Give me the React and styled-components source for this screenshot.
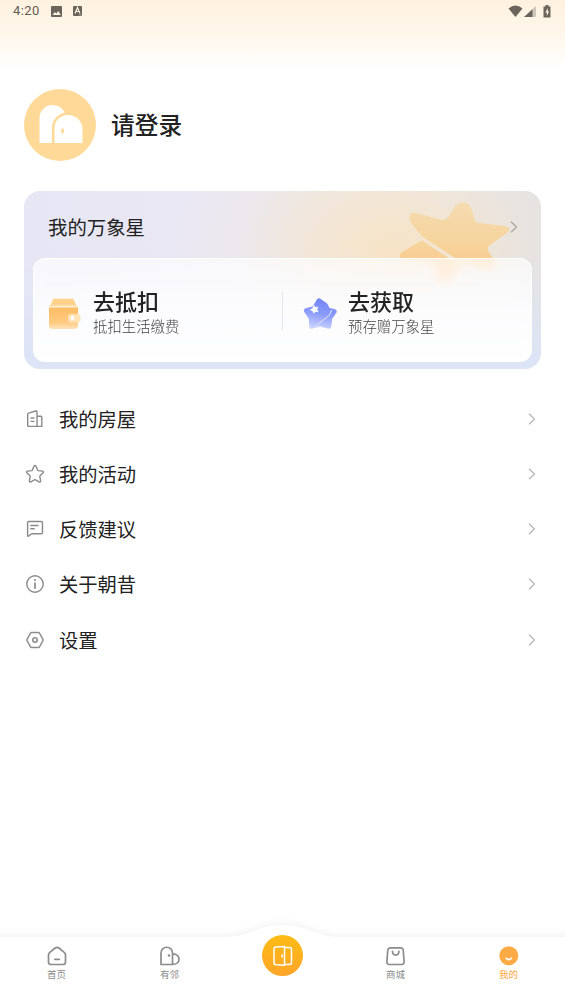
import React from "react";
import styled, { createGlobalStyle } from "styled-components";

const GlobalStyle = createGlobalStyle`
  * {
    box-sizing: border-box;
  }

  body {
    margin: 0;
    background: #fff;
    font-family: "Noto Sans CJK SC", sans-serif;
    color: #222;
  }
`;

// Styled Components
const Page = styled.div`
  display: flex;
  flex-direction: column;
  width: 100%;
  height: 1004px;
  overflow: hidden;
  background: linear-gradient(#fff1df 0, #fff7eb 34px, #fffefc 66px, #fff 70px);
`;

const StatusBar = styled.header`
  display: flex;
  align-items: center;
  height: 22px;
  padding: 0 14px 0 13px;
`;

const Clock = styled.span`
  width: 38px;
  font-family: Roboto, sans-serif;
  font-size: 13px;
  font-weight: 400;
  letter-spacing: 0.4px;
  line-height: 22px;
  color: #5f5a52;
`;

const StatusIcon = styled.svg`
  display: block;
  flex: none;
  margin-left: ${(props) => props.$gap || 0}px;
`;

const Spacer = styled.div`
  flex: 1;
`;

const Profile = styled.section`
  display: flex;
  align-items: center;
  gap: 15px;
  margin: 67px 24px 30px;
`;

const Avatar = styled.svg`
  display: block;
  width: 72px;
  height: 72px;
`;

const LoginText = styled.h1`
  margin: 0;
  padding-bottom: 3px;
  font-size: 23.7px;
  font-weight: 500;
  line-height: 36px;
`;

const StarCard = styled.section`
  position: relative;
  display: flex;
  flex-direction: column;
  height: 178px;
  margin: 0 24px;
  padding: 0 9px 7px;
  border-radius: 16px;
  overflow: hidden;
  background:
    linear-gradient(rgba(220, 228, 246, 0) 35%, #dce4f6 96%),
    radial-gradient(
      ellipse 220px 150px at 365px 60px,
      rgba(248, 227, 194, 0.9) 0,
      rgba(246, 229, 204, 0.62) 35%,
      rgba(242, 230, 216, 0.2) 68%,
      rgba(240, 230, 218, 0) 100%
    ),
    linear-gradient(90deg, #e7e6f4 0, #eae8f3 38%, #ece8e6 65%, #e4e2e3 100%);
`;

const CardStar = styled.svg`
  position: absolute;
  top: 0;
  left: 367px;
`;

const CardHeader = styled.div`
  position: relative;
  display: flex;
  align-items: center;
  justify-content: space-between;
  height: 67px;
  padding: 5px 14px 0 15px;
  font-size: 19.4px;
  line-height: 28px;
`;

const Panel = styled.div`
  position: relative;
  display: flex;
  align-items: center;
  flex: 1;
  border: 1.5px solid rgba(255, 255, 255, 0.85);
  border-radius: 12px;
  background: linear-gradient(
    rgba(255, 255, 255, 0.68) 0,
    rgba(255, 255, 255, 0.87) 50%,
    rgba(255, 255, 255, 0.98) 100%
  );
  backdrop-filter: blur(4px);
`;

const PanelItem = styled.div`
  display: flex;
  align-items: center;
  width: ${(props) => props.$width}px;
  padding: 5px 0 0 ${(props) => props.$left}px;
  gap: ${(props) => props.$gap}px;

  > svg {
    margin-top: 2px;
  }
`;

const Divider = styled.div`
  width: 1px;
  height: 38px;
  margin-top: 2px;
  background: #e6e6ea;
`;

const ItemTitle = styled.div`
  font-size: 22px;
  font-weight: 500;
  line-height: 27px;
`;

const ItemNote = styled.div`
  font-size: 14.4px;
  font-weight: 300;
  line-height: 24px;
  color: #444;
`;

const Menu = styled.nav`
  margin-top: 22px;
`;

const MenuRow = styled.div`
  display: flex;
  align-items: center;
  height: 55.25px;
  padding: 0 29px 0 25px;
`;

const MenuLabel = styled.span`
  flex: 1;
  margin-left: 14px;
  font-size: 19.3px;
  line-height: 28px;
`;

const MenuIcon = styled.svg`
  display: block;
  width: 20px;
  height: 20px;
  fill: none;
  stroke: #8b8b8b;
  stroke-width: 1.4;
  stroke-linecap: round;
  stroke-linejoin: round;
`;

const ArrowIcon = styled.svg`
  display: block;
  width: 8px;
  height: 12px;
  fill: none;
  stroke: ${(props) => props.$color || "#b4b4b4"};
  stroke-width: 1.2;
`;

const TabBar = styled.footer`
  position: relative;
  display: flex;
  height: 88px;
  margin-top: auto;
  padding-top: 20px;
`;

const TabBarShape = styled.svg`
  position: absolute;
  top: 0;
  left: 0;
`;

const Tab = styled.div`
  position: relative;
  display: flex;
  flex: 1;
  flex-direction: column;
  align-items: center;
  padding-top: 9px;
  font-size: 9.5px;
  line-height: 14px;
  color: ${(props) => (props.$active ? "#ffa63c" : "#8c8c8c")};
`;

const TabIcon = styled.svg`
  display: block;
  width: 22px;
  height: 22px;
  fill: none;
  stroke: #8c8c8c;
  stroke-width: 1.7;
  stroke-linecap: round;
  stroke-linejoin: round;
`;

const DoorButton = styled.div`
  display: flex;
  align-items: center;
  justify-content: center;
  width: 41px;
  height: 41px;
  margin-top: -10px;
  border-radius: 50%;
  background: linear-gradient(#fdbc14, #ffa528);
`;

const menuItems = [
  {
    label: "我的房屋",
    icon: (
      <path d="M2.700 16.600V5.400q0-1 1-1.300l7-2.100q1.300-.3 1.300 1v14.400H3.500q-.8 0-.8-.8zM12 7.300h3.800q1 0 1 1v9.100H12M6 9h3M6 12.400h3" />
    ),
  },
  {
    label: "我的活动",
    icon: (
      <path d="M9 2.300q1-1.800 2 0l1.700 3.800q.2.400.7.500l4 .5q1.800.4.700 1.700l-3 3q-.4.400-.3.900l.8 4q.1 1.800-1.500 1.100l-3.500-1.900q-.6-.3-1.200 0l-3.500 1.900q-1.600.7-1.500-1.100l.8-4q.1-.5-.3-.9l-3-3Q.8 7.500 2.600 7.100l4-.5q.5-.1.700-.5z" />
    ),
  },
  {
    label: "反馈建议",
    icon: (
      <path d="M3.700 2.500h12.600q1.200 0 1.200 1.200v9.800q0 1.200-1.200 1.200H6.700L3.600 17.100q-1 .4-1-.8V3.700Q2.600 2.500 3.700 2.500zM5.800 6.500h7.200M5.800 9.800h3.400" />
    ),
  },
  {
    label: "关于朝昔",
    icon: (
      <>
        <circle cx="10" cy="10" r="8.2" />
        <path d="M10 9v5.200" strokeWidth="1.700" />
        <circle cx="10" cy="6.100" r="1" fill="#8b8b8b" stroke="none" />
      </>
    ),
  },
  {
    label: "设置",
    icon: (
      <>
        <path d="M6.500 2.500h7q.7 0 1 .6l3.500 6.200q.4.700 0 1.400l-3.500 6.200q-.3.600-1 .6h-7q-.7 0-1-.6L2 10.700q-.4-.7 0-1.400l3.500-6.200q.3-.6 1-.6z" />
        <circle cx="10" cy="10" r="2.200" strokeWidth="1.600" />
      </>
    ),
  },
];

const Arrow = ({ color }) => (
  <ArrowIcon viewBox="0 0 8 12" $color={color}>
    <path d="M1 .8 6.500 6 1 11.200" />
  </ArrowIcon>
);

const WalletIcon = () => (
  <svg width="34" height="34" viewBox="0 0 34 34">
    <defs>
      <linearGradient id="wallet" x1="0" y1="0" x2="0" y2="1">
        <stop offset="0" stopColor="#ffbd63" />
        <stop offset="0.700" stopColor="#ffca80" />
        <stop offset="1" stopColor="#ffe3bd" />
      </linearGradient>
    </defs>
    <path d="M2.500 9 4.500 3Q5 1.700 6.500 1.700h17.500q1.500 0 2 1.300L28.500 9z" fill="#ffd18b" />
    <path d="M1 9.500q0-2 2-2h24q2 0 2 2" fill="#ffdba4" />
    <path d="M1 10h29v18.500q0 3.500-3.500 3.500h-22Q1 32 1 28.500z" fill="url(#wallet)" />
    <path d="M1 10h28" stroke="#fff0d8" strokeWidth="1" />
    <rect x="20" y="17" width="12.500" height="8.500" rx="3" fill="#ffe2b5" />
    <circle cx="24.500" cy="21" r="2" fill="#fff" />
  </svg>
);

const BlueStarIcon = () => (
  <svg width="36" height="36" viewBox="0 0 36 36">
    <defs>
      <linearGradient id="blueStar" gradientUnits="userSpaceOnUse" x1="21" y1="2" x2="15" y2="34">
        <stop offset="0" stopColor="#7182f5" />
        <stop offset="0.500" stopColor="#8b9cfb" />
        <stop offset="1" stopColor="#d0d9ff" />
      </linearGradient>
    </defs>
    <path
      d="m17 4.500 6.500 4.500 2.500 5 6.500 1.500-4.500 6.500-1 8.500-9-2.500-8.500 2.500-.5-8.500L4 14.500l8-2z"
      fill="url(#blueStar)"
      stroke="url(#blueStar)"
      strokeWidth="4.500"
      strokeLinejoin="round"
    />
    <path d="M13 31.500Q19 25 24 22T29.500 14" fill="none" stroke="#e4e9ff" strokeWidth="1" />
    <path
      d="m12 9.500 1.200 2 2.700-.2-1.200 2.200 1.300 2.100-2.700-.2-1.700 1.800-.7-2.300-2.400-1.100 2.300-1.400z"
      fill="#fff"
      stroke="#fff"
      strokeWidth="0.800"
      strokeLinejoin="round"
    />
  </svg>
);

// Main Component
const App = () => {
  return (
    <>
      <GlobalStyle />
      <Page>
        <StatusBar>
          <Clock>4:20</Clock>
          <StatusIcon width="11" height="11" viewBox="0 0 11 11">
            <rect width="11" height="11" rx="1" fill="#69645c" />
            <path d="m1.500 9 2.300-3 1.500 1.500L7.400 5 9.700 9z" fill="#fff3e2" />
          </StatusIcon>
          <StatusIcon width="9" height="10" viewBox="0 0 9 10" $gap={11}>
            <rect width="9" height="10" rx="1" fill="#69645c" />
            <path d="m2 7.500 2.500-6 2.500 6M3 5.500h3" fill="none" stroke="#fff3e2" strokeWidth="1.200" />
            <path d="m6 9.500 1-1 1 1" fill="none" stroke="#fff3e2" strokeWidth="0.600" />
          </StatusIcon>
          <Spacer />
          <StatusIcon width="15" height="12" viewBox="0 0 15 12">
            <path d="M.5 3.500Q7.500-2.500 14.500 3.500L7.500 12z" fill="#69645c" />
          </StatusIcon>
          <StatusIcon width="12" height="11" viewBox="0 0 12 11" $gap={1}>
            <path d="M12 0v11H0z" fill="#cfc6ba" />
            <path d="M8.500 3.200V11H0z" fill="#69645c" />
          </StatusIcon>
          <StatusIcon width="8" height="13" viewBox="0 0 8 13" $gap={7}>
            <path d="M2.500 0h3v1.500H7.500V12.500H.5V1.500h2z" fill="#69645c" />
            <path d="M4.800 3 2.300 7.500h1.500V11l2.300-4.500H4.800z" fill="#fff3e2" />
          </StatusIcon>
        </StatusBar>

        <Profile>
          <Avatar viewBox="0 0 72 72">
            <circle cx="36" cy="36" r="36" fill="#ffd997" />
            <path d="M15.500 54V29.500a13 13 0 0 1 13-13.500c6 0 9.500 3 12.500 7.500C33 25 28 32 28 39v15z" fill="#fff" />
            <path d="M30.500 54V39c0-7.500 6-13 13.500-13s14.500 6 14.500 14v14z" fill="#fff" />
            <ellipse cx="38.500" cy="42" rx="1.500" ry="2.700" fill="#ffd997" />
          </Avatar>
          <LoginText>请登录</LoginText>
        </Profile>

        <StarCard>
          <CardStar width="130" height="100" viewBox="0 0 130 100">
            <defs>
              <linearGradient id="cardStar" gradientUnits="userSpaceOnUse" x1="60" y1="10" x2="60" y2="92">
                <stop offset="0" stopColor="#f5dcb2" />
                <stop offset="0.550" stopColor="#f6d39a" />
                <stop offset="1" stopColor="#ffc285" />
              </linearGradient>
            </defs>
            <g fill="url(#cardStar)">
              <path d="M18 27Q19 21 25 22L51 29Q55 29 58 25L65 14Q70 10 76 12 79 13 80 17L84 29Q85 32 89 32L113 35Q121 37 117 41L99 54Q96 56 97 59L104 72Q106 80 97 79L84 76 64 67 32 46Q22 37 18 27z" />
              <path d="M31 49.500 60 68.500 73 73 60 88Q55 93 49 91 45 89 45 83L44 72 10 68Q7 64 11 61z" />
            </g>
          </CardStar>
          <CardHeader>
            <span>我的万象星</span>
            <Arrow color="#a9a49f" />
          </CardHeader>
          <Panel>
            <PanelItem $left={14} $gap={11} $width={248}>
              <WalletIcon />
              <div>
                <ItemTitle>去抵扣</ItemTitle>
                <ItemNote>抵扣生活缴费</ItemNote>
              </div>
            </PanelItem>
            <Divider />
            <PanelItem $left={19} $gap={10} $width={245}>
              <BlueStarIcon />
              <div>
                <ItemTitle>去获取</ItemTitle>
                <ItemNote>预存赠万象星</ItemNote>
              </div>
            </PanelItem>
          </Panel>
        </StarCard>

        <Menu>
          {menuItems.map((item) => (
            <MenuRow key={item.label}>
              <MenuIcon viewBox="0 0 20 20">{item.icon}</MenuIcon>
              <MenuLabel>{item.label}</MenuLabel>
              <Arrow />
            </MenuRow>
          ))}
        </Menu>

        <TabBar>
          <TabBarShape width="565" height="88" viewBox="0 0 565 88">
            <defs>
              <filter id="barShadow" x="-10%" y="-40%" width="120%" height="180%">
                <feGaussianBlur stdDeviation="5" />
              </filter>
            </defs>
            <path
              d="M-20 20H225C249 20 257 8 282.500 8S316 20 340 20H585V100H-20z"
              fill="#000"
              opacity="0.060"
              filter="url(#barShadow)"
            />
            <path d="M0 21H225C249 21 257 9 282.500 9S316 21 340 21H565V88H0z" fill="#fff" />
          </TabBarShape>
          <Tab>
            <TabIcon viewBox="0 0 22 22">
              <path d="M2.500 10q0-1.700 1.300-2.700l5.300-4.300q1.900-1.400 3.800 0l5.300 4.300q1.300 1 1.300 2.700v7q0 2.500-2.500 2.500H5Q2.500 19.500 2.500 17zM8.800 14.300h4.500" />
            </TabIcon>
            首页
          </Tab>
          <Tab>
            <TabIcon viewBox="0 0 22 22">
              <path d="M2 19.500V8a5.700 5.700 0 0 1 11.500 0v11.500zM13.500 8.800c4 0 6.500 2.400 6.500 5.400s-2.500 5.300-6.500 5.300" />
              <circle cx="10" cy="10.500" r="1.300" fill="#8c8c8c" stroke="none" />
            </TabIcon>
            有邻
          </Tab>
          <Tab>
            <DoorButton>
              <svg width="22" height="22" viewBox="0 0 22 22" fill="none" stroke="#fff" strokeWidth="1.500" strokeLinejoin="round">
                <path d="M4 2 12.500 1.500v18.800L4 19.700q-2-.2-2-2V4q0-1.900 2-2zM12.500 2.500h5q2 0 2 2V17.500q0 2-2 2h-5M10 9.500v3" />
              </svg>
            </DoorButton>
          </Tab>
          <Tab>
            <TabIcon viewBox="0 0 22 22">
              <path d="M5.800 2.800h9.900q2.200 0 2.500 2.200l.9 11.500q.2 3-2.600 3h-12q-2.800 0-2.600-3L2.800 5q.3-2.200 3-2.200zM7.500 6.300c0 5 6.400 5 6.400 0" />
            </TabIcon>
            商城
          </Tab>
          <Tab $active>
            <TabIcon viewBox="0 0 22 22">
              <circle cx="10.800" cy="10.700" r="9.500" fill="#ffab45" stroke="none" />
              <path d="M8.300 13.300q2.500 2.300 5 0" stroke="#fff" strokeWidth="1.800" />
            </TabIcon>
            我的
          </Tab>
        </TabBar>
      </Page>
    </>
  );
};

export default App;
